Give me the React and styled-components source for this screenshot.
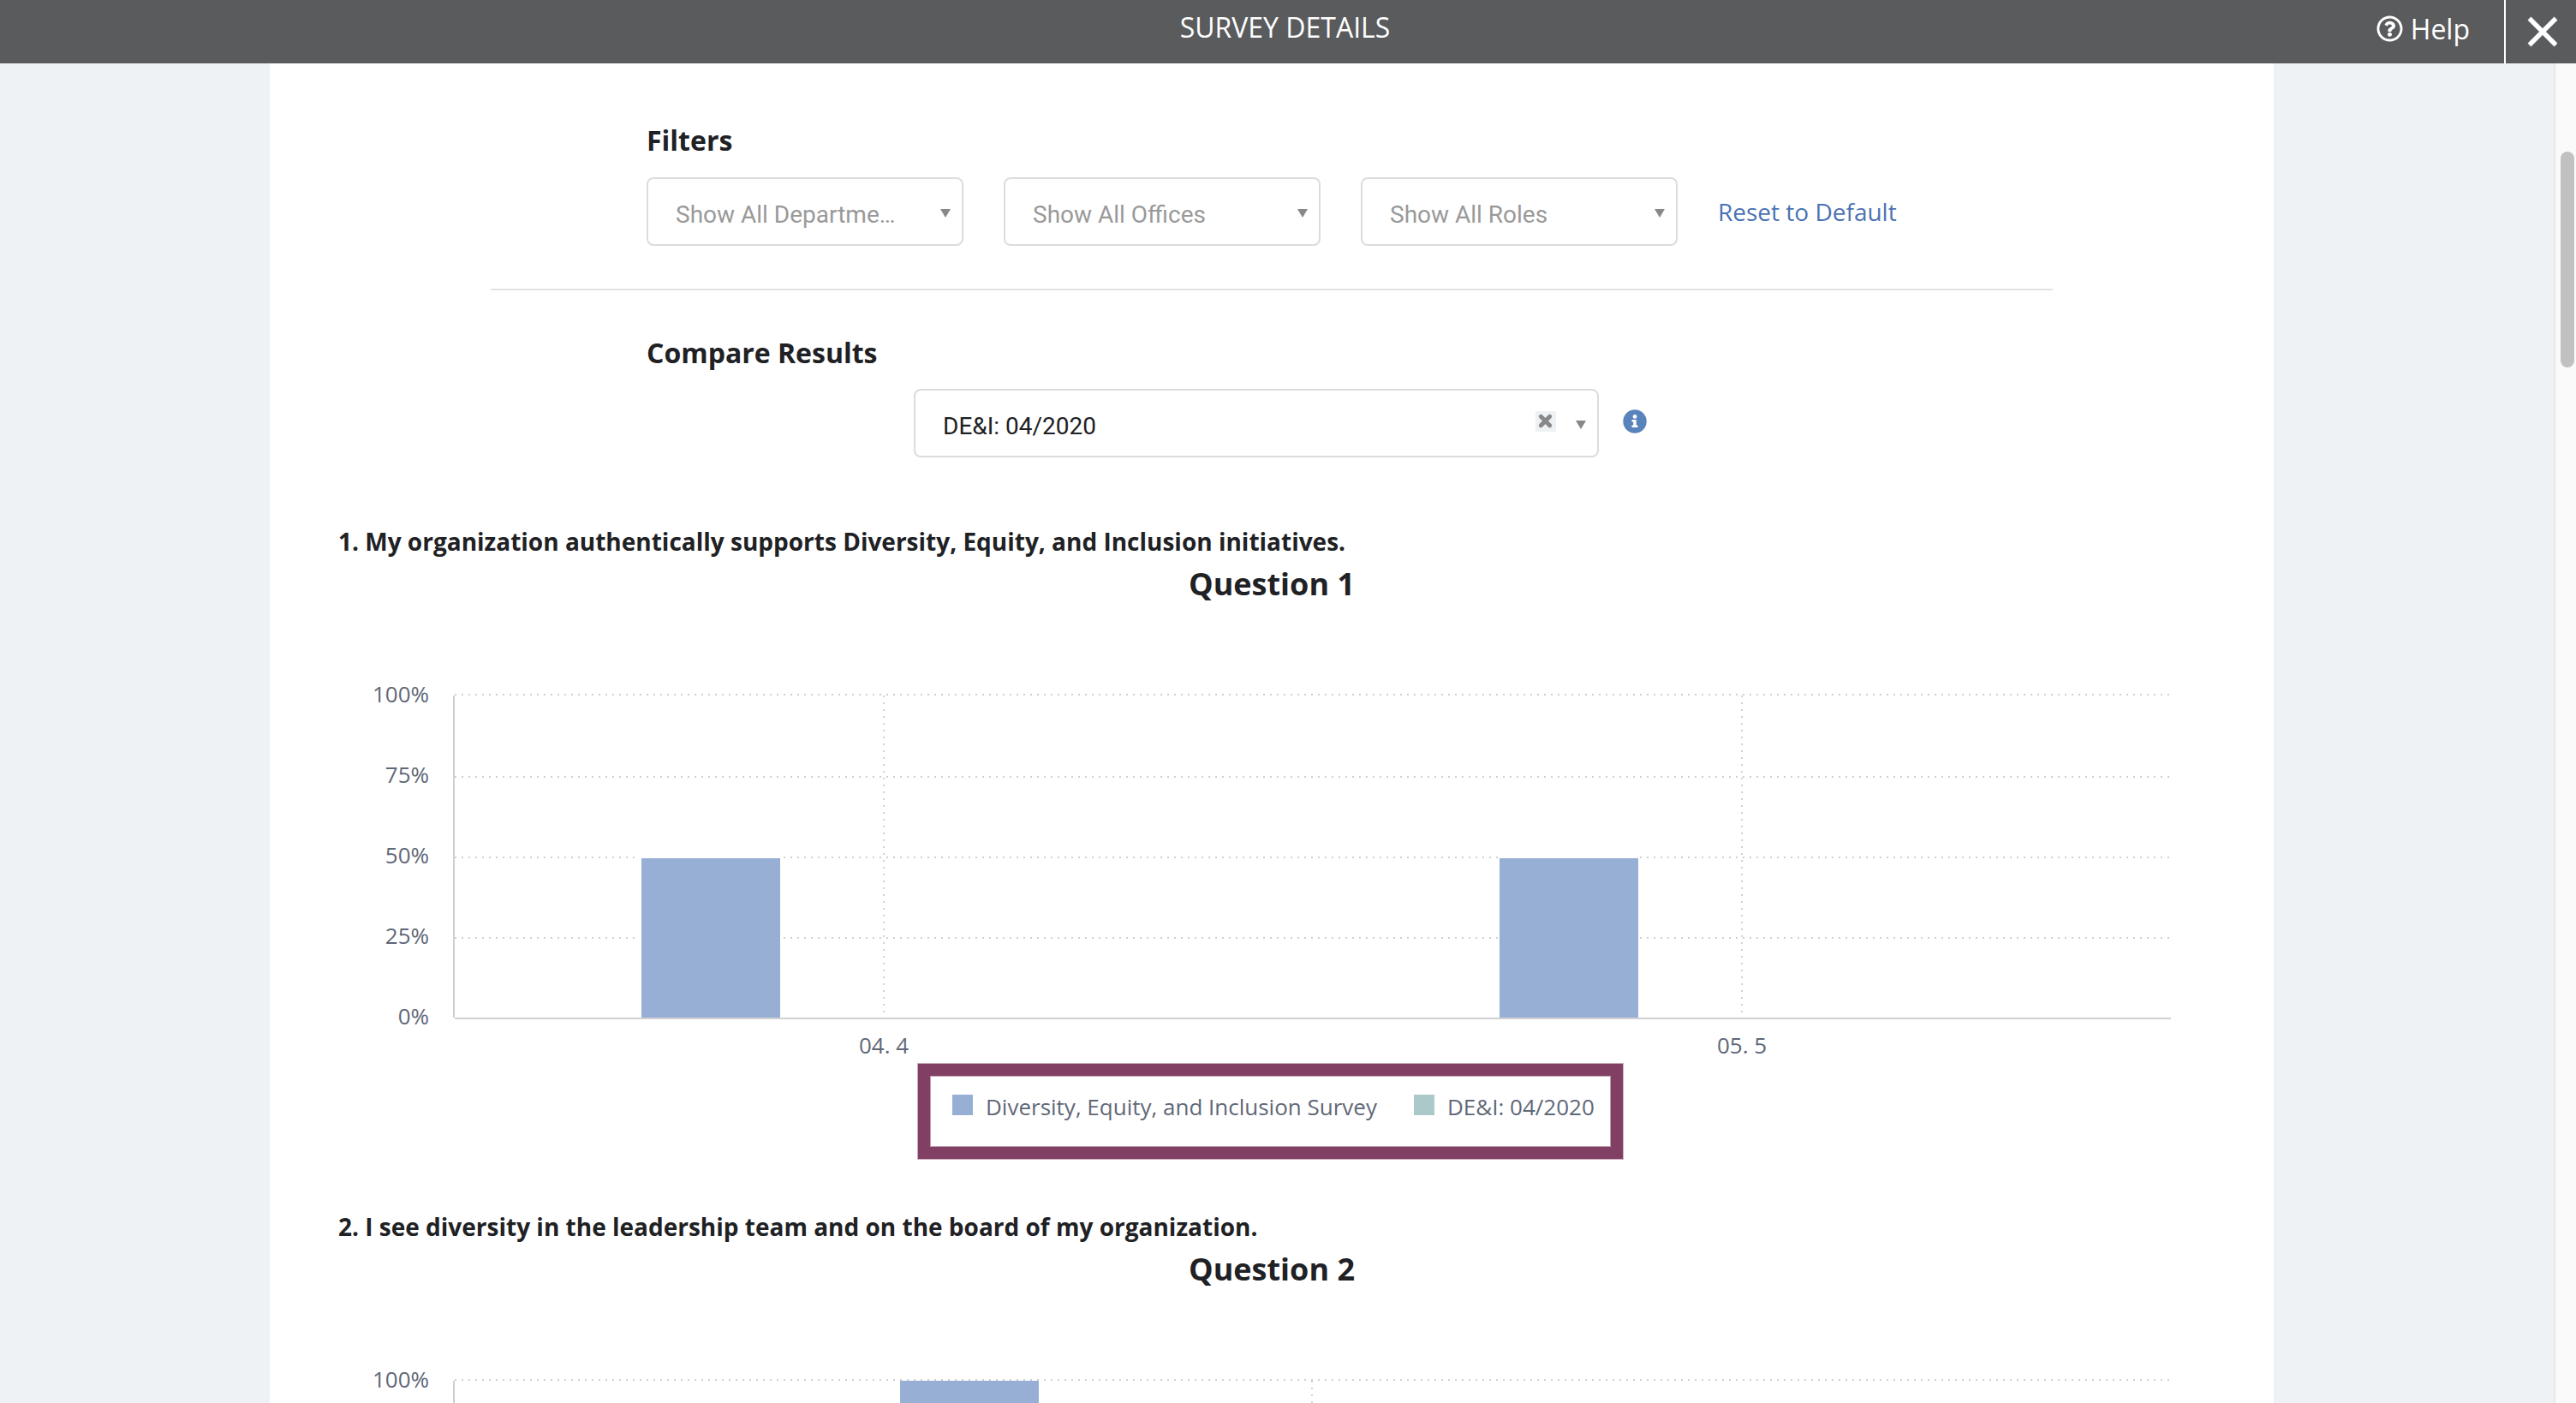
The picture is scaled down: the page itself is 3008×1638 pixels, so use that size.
import React, { Component } from "react";
import styled, { createGlobalStyle } from "styled-components";
import { FaRegQuestionCircle } from "react-icons/fa";

const GlobalStyle = createGlobalStyle`
  * { box-sizing: border-box; }
  body {
    margin: 0;
    overflow: hidden;
    background: #fff;
    color: #202124;
    font-family: "Open Sans", sans-serif;
  }
`;

const Page = styled.div`
  display: flex;
  flex-direction: column;
  width: 3008px;
  height: 1638px;
  overflow: hidden;
`;

const Header = styled.header`
  display: grid;
  grid-template-columns: 1fr auto 1fr;
  height: 74px;
  flex-shrink: 0;
  background: #5a5b5d;
  color: #fff;
  font-size: 32px;
`;

const HeaderTitle = styled.div`
  margin-right: 7px;
  line-height: 64px;
`;

const HeaderActions = styled.div`
  display: flex;
  grid-column: 3;
  justify-content: flex-end;
`;

const HelpLink = styled.a`
  display: flex;
  align-items: flex-start;
  gap: 9px;
  padding-right: 40px;
  line-height: 68px;
  svg {
    width: 31px;
    height: 31px;
    margin-top: 18px;
  }
`;

const CloseButton = styled.div`
  width: 84px;
  border-left: 2px solid #fff;
  padding: 19px 0 0 25px;
  svg {
    display: block;
  }
`;

const Body = styled.div`
  display: flex;
  flex: 1;
  min-height: 0;
`;

const Main = styled.main`
  flex: 1;
  padding-left: 315px;
  background: #eef2f5;
  overflow: hidden;
`;

const Sheet = styled.div`
  width: 2340px;
  height: 1700px;
  padding-top: 70px;
  background: #fff;
`;

const ScrollTrack = styled.div`
  width: 26px;
  padding: 103px 0 0 6px;
  border-left: 2px solid #e8e8e8;
  background: #fafafa;
`;

const ScrollThumb = styled.div`
  width: 16px;
  height: 252px;
  border-radius: 8px;
  background: #c1c1c1;
`;

const SectionLabel = styled.h2`
  margin: 0 0 ${props => props.$gap}px 440px;
  font-size: 32px;
  line-height: 40px;
  font-weight: 700;
`;

const FilterRow = styled.div`
  display: flex;
  align-items: center;
  gap: 47px;
  margin-left: 440px;
`;

const Select = styled.div`
  display: flex;
  align-items: center;
  width: ${props => props.$width}px;
  height: 80px;
  padding: 0 13px 0 32px;
  border: 2px solid #dcdcdc;
  border-radius: 8px;
  color: ${props => (props.$filled ? "#202124" : "#999")};
  font-family: Roboto, sans-serif;
  font-size: 28px;
`;

const SelectText = styled.span`
  flex: 1;
  padding-top: 6px;
`;

const Arrow = styled.span`
  border: 6px solid transparent;
  border-top: 10px solid #888;
  border-bottom: 0;
  margin-top: ${props => props.$top}px;
`;

const ClearButton = styled.span`
  width: 24px;
  height: 24px;
  margin: -4px 23px 0 0;
  background: #eef2f5;
  svg {
    display: block;
  }
`;

const ResetLink = styled.a`
  color: #4a73b3;
  font-size: 28px;
`;

const Rule = styled.div`
  height: 2px;
  margin: 50px 258px 53px;
  background: #e2e2e2;
`;

const CompareRow = styled.div`
  display: flex;
  align-items: center;
  gap: 28px;
  margin: 0 0 78px 752px;
`;

const InfoIcon = styled.svg`
  margin-top: -5px;
`;

const Question = styled.section`
  height: 800px;
`;

const QuestionText = styled.h3`
  margin: 0 0 5px 80px;
  font-size: 28px;
  line-height: 40px;
  font-weight: 700;
`;

const ChartTitle = styled.h4`
  margin: 0 0 -1px;
  font-size: 36px;
  line-height: 50px;
  font-weight: 700;
  text-align: center;
`;

const ChartSvg = styled.svg`
  display: block;
  text {
    fill: #5f6877;
    font-family: "Open Sans", sans-serif;
    font-size: 26px;
  }
`;

const Legend = styled.div`
  display: flex;
  align-items: flex-start;
  width: 823px;
  height: 111px;
  margin-left: 757px;
  padding: 22px 0 0 26px;
  border: 14px solid #814063;
  box-shadow: 0 0 0 1px #c9aebb, inset 0 0 0 1px #c0a0b0;
`;

const LegendItem = styled.div`
  display: flex;
  gap: 15px;
  margin-right: 43px;
  color: #5f6877;
  font-size: 26px;
  line-height: 28px;
  white-space: nowrap;
`;

const Swatch = styled.span`
  width: 24px;
  height: 24px;
  background: ${props => props.$color};
`;

const filters = ["Show All Departme…", "Show All Offices", "Show All Roles"];

const gridLines = [
  { label: "100%", y: 105, labelY: 114 },
  { label: "75%", y: 201, labelY: 208 },
  { label: "50%", y: 295, labelY: 301.5 },
  { label: "25%", y: 389, labelY: 396 },
  { label: "0%", y: 483, labelY: 490 }
];

// x is measured from the left edge of the sheet
const firstChart = {
  lines: gridLines,
  ticks: [{ x: 717, label: "04. 4" }, { x: 1719, label: "05. 5" }],
  bars: [{ x: 434, top: 296 }, { x: 1436, top: 296 }]
};

const secondChart = {
  lines: gridLines.slice(0, 1),
  ticks: [{ x: 1217 }],
  bars: [{ x: 736, top: 106 }]
};

class Chart extends Component {
  render = () => {
    const { lines, ticks, bars } = this.props;

    return (
      <ChartSvg width="2340" height="536" viewBox="0 0 2340 536">
        {lines.map(line => (
          <g key={line.label}>
            <text x="186" y={line.labelY} textAnchor="end">{line.label}</text>
            {line.y < 483 && (
              <line x1="216" x2="2219" y1={line.y} y2={line.y} stroke="#d0d0d0" strokeWidth="2" strokeDasharray="2 6" />
            )}
          </g>
        ))}
        {ticks.map(tick => (
          <g key={tick.x}>
            <line x1={tick.x} x2={tick.x} y1="106" y2="482" stroke="#d0d0d0" strokeWidth="2" strokeDasharray="2 6" />
            {tick.label && <text x={tick.x} y="523.5" textAnchor="middle">{tick.label}</text>}
          </g>
        ))}
        {bars.map(bar => {
          // white edge round the bar, kept inside the plot area
          const edge = Math.max(106, bar.top - 2);
          return (
            <g key={bar.x}>
              <rect x={bar.x - 2} y={edge} width="166" height={482 - edge} fill="#fff" />
              <rect x={bar.x} y={bar.top} width="162" height={482 - bar.top} fill="#98afd5" />
            </g>
          );
        })}
        <rect x="214" y="106" width="2" height="376" fill="#cfcfcf" />
        <rect x="216" y="482" width="2004" height="2" fill="#d0d0d4" />
      </ChartSvg>
    );
  };
}

class App extends Component {
  render = () => {
    return (
      <Page>
        <GlobalStyle />
        <Header>
          <span />
          <HeaderTitle>SURVEY DETAILS</HeaderTitle>
          <HeaderActions>
            <HelpLink><FaRegQuestionCircle />Help</HelpLink>
            <CloseButton>
              <svg width="36" height="36" viewBox="0 0 36 36">
                <path d="M2.5 2.5L33.5 33.5M33.5 2.5L2.5 33.5" stroke="#fff" strokeWidth="5.4" />
              </svg>
            </CloseButton>
          </HeaderActions>
        </Header>
        <Body>
          <Main>
            <Sheet>
              <SectionLabel $gap={23}>Filters</SectionLabel>
              <FilterRow>
                {filters.map(name => (
                  <Select key={name} $width={370}>
                    <SelectText>{name}</SelectText>
                    <Arrow $top={4} />
                  </Select>
                ))}
                <ResetLink>Reset to Default</ResetLink>
              </FilterRow>
              <Rule />
              <SectionLabel $gap={22}>Compare Results</SectionLabel>
              <CompareRow>
                <Select $width={800} $filled>
                  <SelectText>DE&amp;I: 04/2020</SelectText>
                  <ClearButton>
                    <svg width="24" height="24" viewBox="0 0 24 24">
                      <path d="M6.3 6.3L16.7 16.7M16.7 6.3L6.3 16.7" stroke="#888" strokeWidth="5" strokeLinecap="round" />
                    </svg>
                  </ClearButton>
                  <Arrow $top={4} />
                </Select>
                <InfoIcon width="28" height="28" viewBox="0 0 28 28">
                  <circle cx="14" cy="14" r="13.7" fill="#5884bb" />
                  <circle cx="14" cy="8.4" r="2.4" fill="#fff" />
                  <path d="M10.5 12h5.2v6.6h1.7v2.4h-6.9v-2.4h1.7v-4.2h-1.7z" fill="#fff" />
                </InfoIcon>
              </CompareRow>
              <Question>
                <QuestionText>1. My organization authentically supports Diversity, Equity, and Inclusion initiatives.</QuestionText>
                <ChartTitle>Question 1</ChartTitle>
                <Chart {...firstChart} />
                <Legend>
                  <LegendItem><Swatch $color="#98afd5" />Diversity, Equity, and Inclusion Survey</LegendItem>
                  <LegendItem><Swatch $color="#abc9ca" />DE&amp;I: 04/2020</LegendItem>
                </Legend>
              </Question>
              <Question>
                <QuestionText>2. I see diversity in the leadership team and on the board of my organization.</QuestionText>
                <ChartTitle>Question 2</ChartTitle>
                <Chart {...secondChart} />
              </Question>
            </Sheet>
          </Main>
          <ScrollTrack>
            <ScrollThumb />
          </ScrollTrack>
        </Body>
      </Page>
    );
  };
}

export default App;
